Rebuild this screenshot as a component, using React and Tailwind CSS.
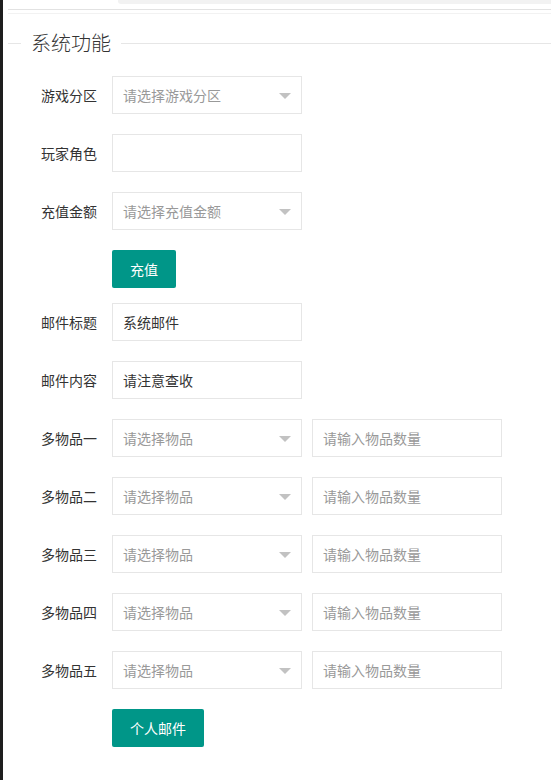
import { useState } from "react";

const font = { fontFamily: '"Microsoft YaHei", "Noto Sans CJK SC", "Noto Sans", sans-serif' };

function Label({ children }) {
  return (
    <label className="block w-[104px] shrink-0 pr-[15px] text-right text-[14px] leading-[38px] text-[#333]">
      {children}
    </label>
  );
}

function FakeSelect({ placeholder }) {
  return (
    <div className="relative flex h-[38px] w-[190px] items-center border border-[#e6e6e6] bg-white pl-[10px] text-[14px] text-[#999]">
      <span>{placeholder}</span>
      {/* 下拉箭头 */}
      <i className="absolute right-[10px] top-[16px] h-0 w-0 border-x-[6px] border-t-[6px] border-x-transparent border-t-[#c2c2c2]" />
    </div>
  );
}

function TextInput({ value, placeholder, onChange }) {
  return (
    <input
      type="text"
      value={value}
      placeholder={placeholder}
      onChange={(e) => onChange && onChange(e.target.value)}
      className="h-[38px] w-[190px] border border-[#e6e6e6] bg-white pl-[10px] text-[14px] text-[#333] outline-none placeholder:text-[#999]"
      style={font}
    />
  );
}

function Item({ label, children }) {
  return (
    <div className="mb-[20px] flex h-[38px] items-center">
      <Label>{label}</Label>
      <div className="flex gap-[10px]">{children}</div>
    </div>
  );
}

function Button({ children, last }) {
  return (
    <div className={last ? "mb-[20px] flex h-[38px]" : "mb-[15px] flex h-[38px]"}>
      <div className="w-[104px] shrink-0" />
      <button
        type="button"
        className="h-[38px] rounded-[2px] bg-[#009688] px-[18px] text-[14px] text-white"
        style={font}
      >
        {children}
      </button>
    </div>
  );
}

export default function App() {
  const [role, setRole] = useState("");
  const [title, setTitle] = useState("系统邮件");
  const [content, setContent] = useState("请注意查收");
  const items = ["多物品一", "多物品二", "多物品三", "多物品四", "多物品五"];

  return (
    <div
      className="relative h-[780px] w-[551px] overflow-hidden border-l-[3px] border-[#1e1e1e] bg-white"
      style={font}
    >
      {/* 顶部残留区域 */}
      <div className="ml-[115px] h-[4px] rounded-bl-[3px] bg-[#f2f2f2]" />
      <div className="ml-[5px] mt-[5px] border-t border-[#e2e2e2]" />
      <div className="ml-[5px] mt-[3px] border-t border-[#f2f2f2]" />

      <fieldset className="ml-[5px] mt-[15px] border-t border-[#e6e6e6] pt-[19px]">
        <legend className="ml-[13px] px-[10px] text-[20px] font-light leading-[28px] text-[#333]">
          系统功能
        </legend>

        <Item label="游戏分区">
          <FakeSelect placeholder="请选择游戏分区" />
        </Item>
        <Item label="玩家角色">
          <TextInput value={role} onChange={setRole} />
        </Item>
        <Item label="充值金额">
          <FakeSelect placeholder="请选择充值金额" />
        </Item>
        <Button>充值</Button>

        <Item label="邮件标题">
          <TextInput value={title} onChange={setTitle} />
        </Item>
        <Item label="邮件内容">
          <TextInput value={content} onChange={setContent} />
        </Item>

        {items.map((name) => (
          <Item key={name} label={name}>
            <FakeSelect placeholder="请选择物品" />
            <TextInput placeholder="请输入物品数量" />
          </Item>
        ))}

        <Button last>个人邮件</Button>
      </fieldset>
    </div>
  );
}
